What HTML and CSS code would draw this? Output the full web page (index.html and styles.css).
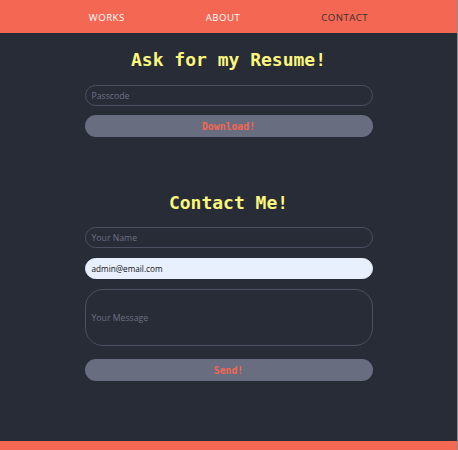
FILE: index.html
```html
<!DOCTYPE html>
<html>
<head>
<meta charset="utf-8">
<link rel="stylesheet" href="styles.css">
</head>
<body>
<div class="page">
  <header class="nav">
    <a class="nav-link">WORKS</a>
    <a class="nav-link">ABOUT</a>
    <a class="nav-link active">CONTACT</a>
  </header>
  <main class="content">
    <section class="block resume">
      <h2 class="title">Ask for my Resume!</h2>
      <div class="field">Passcode</div>
      <button class="btn">Download!</button>
    </section>
    <section class="block contact">
      <h2 class="title">Contact Me!</h2>
      <div class="field">Your Name</div>
      <div class="field filled">admin@email.com</div>
      <div class="field area">Your Message</div>
      <button class="btn send">Send!</button>
    </section>
  </main>
  <footer class="foot"></footer>
</div>
</body>
</html>
```
FILE: styles.css
```css
* { box-sizing: border-box; }
html, body { margin: 0; padding: 0; background: #282c37; overflow: hidden; }
.page {
  width: 458px;
  height: 450px;
  display: flex;
  flex-direction: column;
  background: #282c37;
  border-right: 1px solid #8a8d96;
}
.nav {
  height: 33px;
  background: #f46752;
  display: flex;
  justify-content: center;
  align-items: center;
  gap: 81px;
  padding-top: 1px;
  font-family: "Open Sans", sans-serif;
  font-size: 9.6px;
  letter-spacing: 0.5px;
}
.nav-link { color: #ffffff; }
.nav-link.active { color: #3a2f33; }
.content {
  flex: 1;
  display: flex;
  flex-direction: column;
  align-items: center;
}
.block {
  width: 288px;
  display: flex;
  flex-direction: column;
}
.resume { margin-top: 15px; }
.contact { margin-top: 54px; }
.title {
  margin: 0;
  height: 24px;
  line-height: 24px;
  text-align: center;
  font-family: "DejaVu Sans Mono", monospace;
  font-weight: bold;
  font-size: 18px;
  color: #fbf77e;
}
.field {
  margin-top: 13px;
  height: 21px;
  border: 1px solid #4c5060;
  border-radius: 11px;
  padding: 0 6px;
  display: flex;
  align-items: center;
  font-family: "Open Sans", sans-serif;
  font-size: 8.7px;
  color: #6d7182;
}
.contact .field { margin-top: 12px; }
.contact .field + .field { margin-top: 10px; }
.field.filled {
  background: #e8f0fe;
  border-color: #e8f0fe;
  color: #111;
  font-size: 8.2px;
}
.field.area {
  height: 57px;
  border-radius: 18px;
}
.btn {
  margin-top: 9px;
  height: 22px;
  border: none;
  border-radius: 11px;
  background: #686d80;
  color: #f46752;
  font-family: "DejaVu Sans Mono", monospace;
  font-weight: bold;
  font-size: 9.8px;
  padding: 0;
}
.btn.send { margin-top: 13px; }
.foot {
  height: 9px;
  background: #f46752;
}
```
